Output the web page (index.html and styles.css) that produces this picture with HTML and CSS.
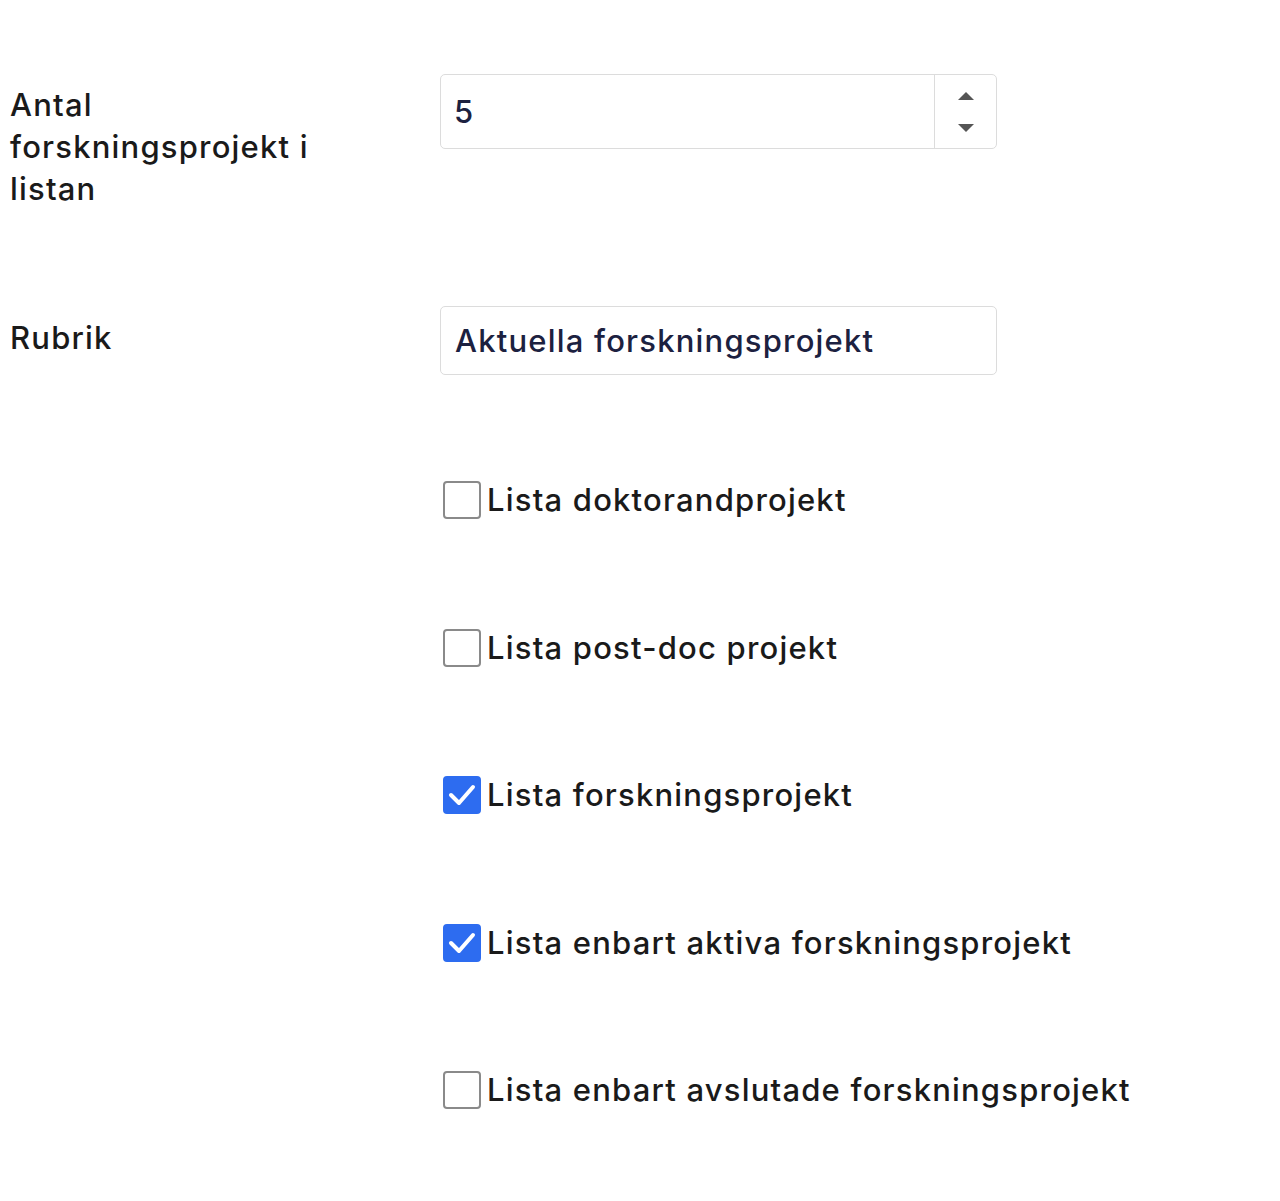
FILE: index.html
```html
<!DOCTYPE html>
<html lang="sv">
<head>
<meta charset="utf-8">
<title>Forskningsprojekt</title>
<link rel="stylesheet" href="styles.css">
</head>
<body>
<form class="form">
  <div class="row row-number">
    <label class="label" for="antal">Antal forskningsprojekt i listan</label>
    <div class="field number-field">
      <span class="number-value" id="antal">5</span>
      <span class="spinner">
        <svg width="20" height="44" viewBox="0 0 20 44" aria-hidden="true">
          <path d="M2 10 L10 2 L18 10 Z" fill="#555"/>
          <path d="M2 34 L10 42 L18 34 Z" fill="#555"/>
        </svg>
      </span>
    </div>
  </div>
  <div class="row row-text">
    <label class="label" for="rubrik">Rubrik</label>
    <div class="field text-field"><span id="rubrik">Aktuella forskningsprojekt</span></div>
  </div>
  <div class="checks">
    <div class="check"><span class="box"></span><span class="check-label">Lista doktorandprojekt</span></div>
    <div class="check"><span class="box"></span><span class="check-label">Lista post-doc projekt</span></div>
    <div class="check"><span class="box checked"><svg width="30" height="26" viewBox="0 0 30 26" aria-hidden="true"><path d="M4 13 L12 21 L26 5" fill="none" stroke="#fff" stroke-width="4" stroke-linecap="round" stroke-linejoin="round"/></svg></span><span class="check-label">Lista forskningsprojekt</span></div>
    <div class="check"><span class="box checked"><svg width="30" height="26" viewBox="0 0 30 26" aria-hidden="true"><path d="M4 13 L12 21 L26 5" fill="none" stroke="#fff" stroke-width="4" stroke-linecap="round" stroke-linejoin="round"/></svg></span><span class="check-label">Lista enbart aktiva forskningsprojekt</span></div>
    <div class="check"><span class="box"></span><span class="check-label">Lista enbart avslutade forskningsprojekt</span></div>
  </div>
</form>
</body>
</html>
```

FILE: styles.css
```css
html, body {
  margin: 0;
  padding: 0;
  background: #fff;
}
body {
  font-family: Inter, "Liberation Sans", sans-serif;
  font-weight: 500;
  color: #1a1a1a;
  letter-spacing: 1.2px;
}
.form {
  padding: 74px 0 0 10px;
}
.row {
  display: grid;
  grid-template-columns: 430px 557px;
  align-items: start;
}
.label {
  font-size: 31px;
  line-height: 42px;
  display: block;
  width: 310px;
}
.row-number .label {
  margin-top: 10px;
}
.row-text {
  margin-top: 96px;
}
.row-text .label {
  margin-top: 11px;
}
.field {
  box-sizing: border-box;
  border: 1.5px solid #dcdcdc;
  border-radius: 5px;
  background: #fff;
  color: #1c2140;
  font-size: 31px;
  display: flex;
  align-items: center;
}
.number-field {
  height: 75px;
}
.number-value {
  flex: 1;
  padding-left: 13px;
}
.spinner {
  width: 61px;
  align-self: stretch;
  border-left: 1.5px solid #dcdcdc;
  display: flex;
  align-items: center;
  justify-content: center;
}
.text-field {
  height: 69px;
  padding-left: 14px;
}
.checks {
  margin-top: 104px;
  padding-left: 433px;
  display: flex;
  flex-direction: column;
  gap: 105.5px;
}
.check {
  display: flex;
  align-items: center;
  height: 42px;
}
.box {
  box-sizing: border-box;
  width: 38px;
  height: 38px;
  border: 2px solid #8a8a8a;
  border-radius: 4px;
  display: flex;
  align-items: center;
  justify-content: center;
  margin-right: 6px;
  background: #fff;
}
.box.checked {
  background: #2d6cf0;
  border-color: #2d6cf0;
}
.check-label {
  font-size: 31px;
  line-height: 42px;
}
```
